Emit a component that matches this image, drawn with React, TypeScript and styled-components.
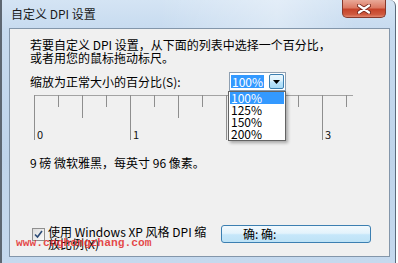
import styled, { createGlobalStyle } from 'styled-components'

const GlobalStyle = createGlobalStyle`
  html, body {
    margin: 0;
    padding: 0;
    background: #ffffff;
  }
  body {
    font-family: "Noto Sans CJK SC", "DejaVu Sans", sans-serif;
  }
`

const cjk = `"Noto Sans CJK SC", "DejaVu Sans", sans-serif`

const percents = ['100%', '125%', '150%', '200%']

// the "2" label sits under the open drop list, so only 0, 1 and 3 are drawn
const rulerLabels = [0, 1, 3]

const Ruler = () => {
  const ticks = Array.from({ length: 14 }, (_, i) => i)
  return (
    <svg width="320" height="48" viewBox="0 0 320 48">
      <line x1="0" y1="0.5" x2="319" y2="0.5" stroke="#a3a3a3" />
      {ticks.map((i) => {
        const x = i * 24 + 0.5
        const len = i % 4 === 0 ? 45 : i % 2 === 0 ? 23 : 12
        return <line key={i} x1={x} y1="0" x2={x} y2={len} stroke="#8e8e8e" />
      })}
      {rulerLabels.map((n) => (
        <text key={n} x={n * 96 + 3} y="44" fontSize="11" fontFamily={cjk} fill="#111">
          {n}
        </text>
      ))}
    </svg>
  )
}

const App = () => {
  return (
    <>
      <GlobalStyle />
      <Frame>
        <TitleBar>
          <TitleText>自定义 DPI 设置</TitleText>
          <CloseButton>
            <svg width="14" height="10" viewBox="0 0 14 10">
              <path d="M2 1.5 L12 8.5 M12 1.5 L2 8.5" stroke="#7a2a1e" strokeWidth="4" strokeLinecap="round" />
              <path d="M2 1.5 L12 8.5 M12 1.5 L2 8.5" stroke="#ffffff" strokeWidth="2.2" strokeLinecap="round" />
            </svg>
          </CloseButton>
        </TitleBar>

        <Client>
          <Intro>
            若要自定义 DPI 设置，从下面的列表中选择一个百分比，
            <br />
            或者用您的鼠标拖动标尺。
          </Intro>

          <ScaleRow>
            <ScaleLabel>缩放为正常大小的百分比(S):</ScaleLabel>
            <Combo>
              <Selected>100%</Selected>
              <DropButton>
                <svg width="7" height="4" viewBox="0 0 7 4">
                  <path d="M0 0 L7 0 L3.5 4 Z" fill="#000" />
                </svg>
              </DropButton>
            </Combo>
          </ScaleRow>

          <RulerArea>
            <Ruler />
            <DropList>
              {percents.map((p, i) => (
                <DropItem key={p} $active={i === 0}>
                  {p}
                </DropItem>
              ))}
            </DropList>
          </RulerArea>

          <Status>9 磅 微软雅黑，每英寸 96 像素。</Status>

          <BottomRow>
            <CheckArea>
              <CheckBox>
                <svg width="9" height="9" viewBox="0 0 9 9">
                  <path d="M1 4.5 L3.5 7 L8 1" stroke="#2b4a76" strokeWidth="1.6" fill="none" />
                </svg>
              </CheckBox>
              <CheckLabel>
                使用 Windows XP 风格 DPI 缩
                <br />
                放比例(X)
              </CheckLabel>
            </CheckArea>
            <OkButton>确: 确:</OkButton>
          </BottomRow>

          <Watermark>www.cnghongzhang.com</Watermark>
        </Client>
      </Frame>
    </>
  )
}

export default App

const Frame = styled.div`
  box-sizing: border-box;
  width: 396px;
  height: 263px;
  display: flex;
  flex-direction: column;
  background: linear-gradient(180deg, #d4e4f4 0%, #c6daef 12%, #bfd4ea 60%, #c5d9ee 100%);
  border-left: 2px solid #5d6772;
  border-right: 1px solid #5a6b7d;
  border-top-right-radius: 6px;
`

const TitleBar = styled.div`
  height: 28px;
  flex: none;
  display: flex;
  align-items: flex-start;
  justify-content: space-between;
  padding: 0 9px 0 9px;
  background: linear-gradient(90deg, rgba(255, 255, 255, 0) 40%, rgba(255, 255, 255, 0.35) 70%, rgba(255, 255, 255, 0) 90%);
`

const TitleText = styled.div`
  margin-top: 7px;
  font-family: ${cjk};
  font-size: 12px;
  line-height: 14px;
  color: #1a1a1a;
`

const CloseButton = styled.div`
  box-sizing: border-box;
  width: 44px;
  height: 18px;
  display: flex;
  align-items: center;
  justify-content: center;
  border: 1px solid #86392c;
  border-top: none;
  border-radius: 0 0 5px 5px;
  background: linear-gradient(180deg, #e9a998 0%, #dc7a64 45%, #c6432a 55%, #cf5a3f 85%, #e2876f 100%);
`

const Client = styled.div`
  position: relative;
  box-sizing: border-box;
  height: 229px;
  margin: 0 5px 6px 7px;
  border: 1px solid #8396aa;
  background: #f0f0f0;
  display: flex;
  flex-direction: column;
  padding: 9px 0 0 20px;
  font-family: ${cjk};
  font-size: 12px;
  color: #000;
`

const Intro = styled.div`
  line-height: 13px;
`

const ScaleRow = styled.div`
  display: flex;
  align-items: center;
  height: 19px;
  margin-top: 8px;
`

const ScaleLabel = styled.div`
  width: 199px;
  line-height: 14px;
  padding-top: 1px;
`

const Combo = styled.div`
  box-sizing: border-box;
  width: 57px;
  height: 19px;
  display: flex;
  align-items: center;
  justify-content: space-between;
  padding: 1px 1px 1px 1px;
  border: 1px solid #8e9fb1;
  background: #fff;
`

const Selected = styled.span`
  background: #3399ff;
  color: #fff;
  font-size: 12px;
  line-height: 13px;
  padding: 0 1px;
`

const DropButton = styled.div`
  box-sizing: border-box;
  width: 15px;
  height: 15px;
  display: flex;
  align-items: center;
  justify-content: center;
  border: 1px solid #3c7fb1;
  border-radius: 2px;
  background: linear-gradient(180deg, #eaf6fd 0%, #d9f0fc 48%, #bee6fd 52%, #a7d9f5 100%);
`

const RulerArea = styled.div`
  position: relative;
  margin-top: 4px;
  padding-left: 4px;
  height: 48px;
`

const DropList = styled.div`
  position: absolute;
  left: 198px;
  top: -4px;
  box-sizing: border-box;
  width: 58px;
  height: 50px;
  padding: 0 1px;
  background: #fff;
  border: 1px solid #646464;
  box-shadow: 2px 2px 3px rgba(0, 0, 0, 0.3);
`

const DropItem = styled.div<{ $active: boolean }>`
  height: 12px;
  line-height: 12px;
  font-size: 12px;
  padding-left: 1px;
  background: ${(p) => (p.$active ? '#3399ff' : 'transparent')};
  color: ${(p) => (p.$active ? '#fff' : '#000')};
`

const Status = styled.div`
  margin-top: 13px;
  line-height: 14px;
`

const BottomRow = styled.div`
  margin-top: auto;
  margin-bottom: 6px;
  display: flex;
  align-items: flex-start;
`

const CheckArea = styled.div`
  display: flex;
  align-items: flex-start;
  padding-top: 1px;
`

const CheckBox = styled.div`
  box-sizing: border-box;
  width: 13px;
  height: 13px;
  margin: 2px 3px 0 2px;
  display: flex;
  align-items: center;
  justify-content: center;
  border: 1px solid #8f8f8f;
  background: linear-gradient(135deg, #dcdcdc, #fafafa);
`

const CheckLabel = styled.div`
  line-height: 12px;
  white-space: nowrap;
`

const OkButton = styled.div`
  box-sizing: border-box;
  width: 150px;
  height: 18px;
  margin-left: auto;
  margin-right: 18px;
  padding-left: 21px;
  display: flex;
  align-items: center;
  border: 1px solid #3c7fb1;
  border-radius: 3px;
  background: linear-gradient(180deg, #f2f9fd 0%, #e3f3fc 45%, #c6e7fa 55%, #bde2f6 100%);
  font-size: 12px;
  line-height: 14px;
`

const Watermark = styled.div`
  position: absolute;
  left: 6px;
  top: 207px;
  font-family: "Liberation Mono", "DejaVu Sans Mono", monospace;
  font-size: 11.3px;
  font-weight: bold;
  line-height: 14px;
  color: rgba(226, 40, 40, 0.85);
  white-space: nowrap;
`
